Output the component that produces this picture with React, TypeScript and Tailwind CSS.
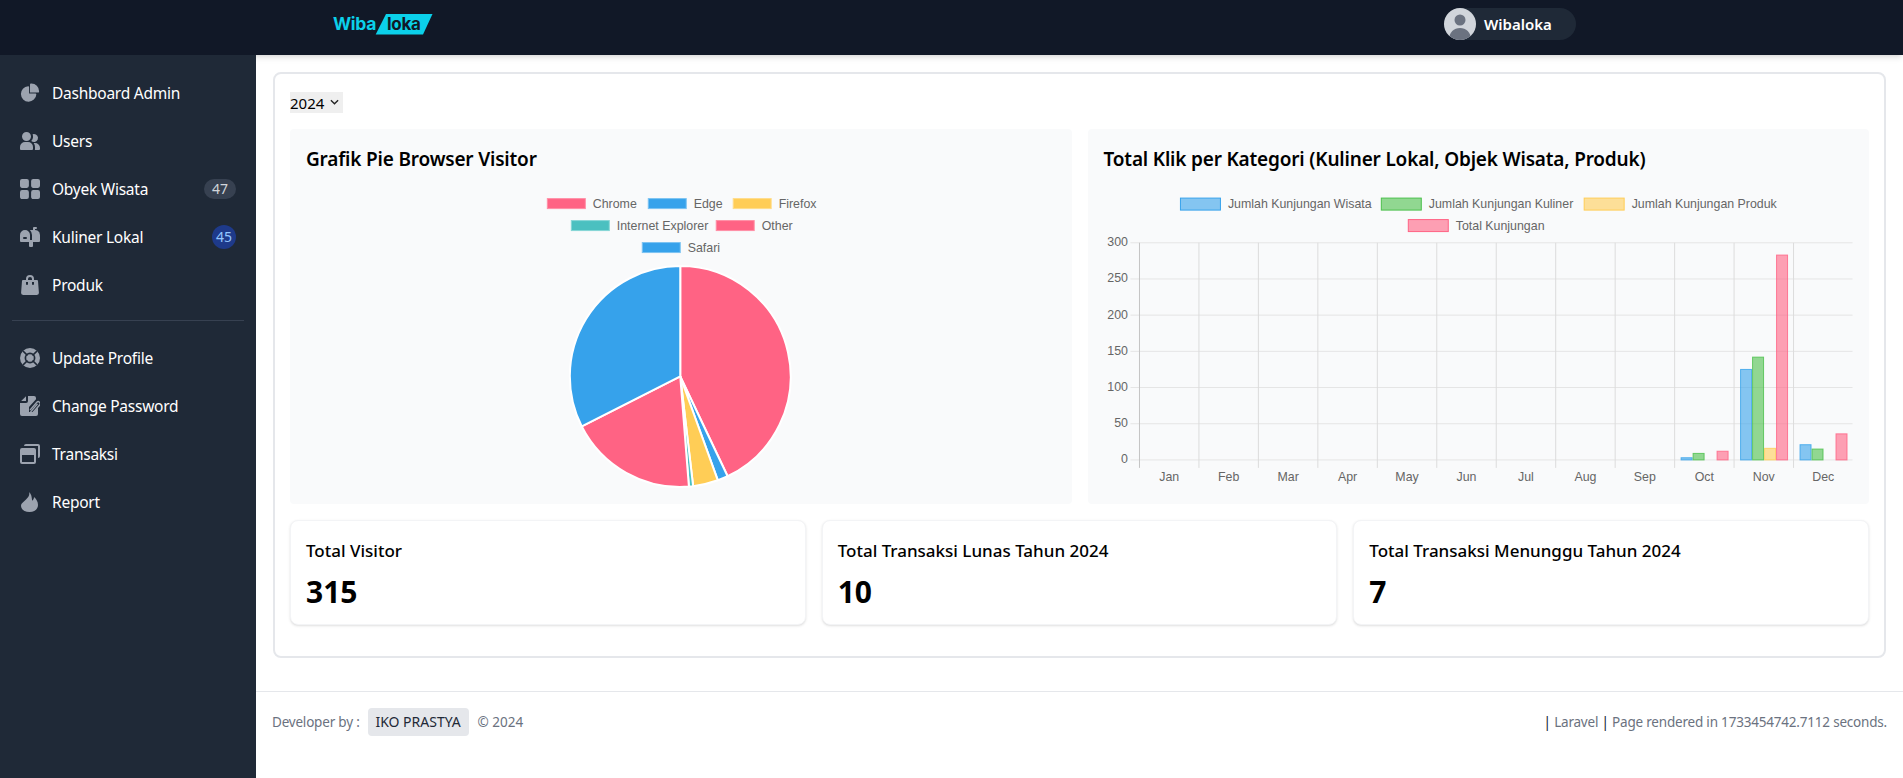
import type { ReactNode } from "react";

const sidebarTop = [
  { label: "Dashboard Admin", icon: "pie" },
  { label: "Users", icon: "users" },
  { label: "Obyek Wisata", icon: "grid", badge: "47" },
  { label: "Kuliner Lokal", icon: "mailbox", badge: "45" },
  { label: "Produk", icon: "bag" },
];

const sidebarBottom = [
  { label: "Update Profile", icon: "buoy" },
  { label: "Change Password", icon: "clip" },
  { label: "Transaksi", icon: "cards" },
  { label: "Report", icon: "flame" },
];

const MenuIcon = ({ name }: { name: string }) => {
  const cls = "h-5 w-5 shrink-0 fill-[#9ca3af]";
  if (name === "pie")
    return (
      <svg viewBox="0 0 22 21" className={cls}>
        <path d="M16.975 11H10V4.025a1 1 0 0 0-1.066-.998 8.5 8.5 0 1 0 9.039 9.039.999.999 0 0 0-1-1.066h.002Z" />
        <path d="M12.5 0c-.157 0-.311.01-.565.027A1 1 0 0 0 11 1.02V10h8.975a1 1 0 0 0 1-.935c.013-.188.028-.374.028-.565A8.51 8.51 0 0 0 12.5 0Z" />
      </svg>
    );
  if (name === "users")
    return (
      <svg viewBox="0 0 20 18" className={cls}>
        <path d="M14 2a3.963 3.963 0 0 0-1.4.267 6.439 6.439 0 0 1-1.331 6.638A4 4 0 1 0 14 2Zm1 9h-1.264A6.957 6.957 0 0 1 15 15v2a2.97 2.97 0 0 1-.184 1H19a1 1 0 0 0 1-1v-1a5.006 5.006 0 0 0-5-5ZM6.5 9a4.5 4.5 0 1 0 0-9 4.5 4.5 0 0 0 0 9ZM8 10H5a5.006 5.006 0 0 0-5 5v2a1 1 0 0 0 1 1h11a1 1 0 0 0 1-1v-2a5.006 5.006 0 0 0-5-5Z" />
      </svg>
    );
  if (name === "grid")
    return (
      <svg viewBox="0 0 18 18" className={cls}>
        <path d="M6.143 0H1.857A1.857 1.857 0 0 0 0 1.857v4.286C0 7.169.831 8 1.857 8h4.286A1.857 1.857 0 0 0 8 6.143V1.857A1.857 1.857 0 0 0 6.143 0Zm10 0h-4.286A1.857 1.857 0 0 0 10 1.857v4.286C10 7.169 10.831 8 11.857 8h4.286A1.857 1.857 0 0 0 18 6.143V1.857A1.857 1.857 0 0 0 16.143 0Zm-10 10H1.857A1.857 1.857 0 0 0 0 11.857v4.286C0 17.169.831 18 1.857 18h4.286A1.857 1.857 0 0 0 8 16.143v-4.286A1.857 1.857 0 0 0 6.143 10Zm10 0h-4.286A1.857 1.857 0 0 0 10 11.857v4.286c0 1.026.831 1.857 1.857 1.857h4.286A1.857 1.857 0 0 0 18 16.143v-4.286A1.857 1.857 0 0 0 16.143 10Z" />
      </svg>
    );
  if (name === "mailbox")
    return (
      <svg viewBox="0 0 20 20" className={cls}>
        <path d="m17.418 3.623-.018-.008a6.713 6.713 0 0 0-2.4-.569V2h1a1 1 0 1 0 0-2h-2a1 1 0 0 0-1 1v2H9.89A6.977 6.977 0 0 1 12 8v5h-2V8A5 5 0 1 0 0 8v6a1 1 0 0 0 1 1h8v4a1 1 0 0 0 1 1h2a1 1 0 0 0 1-1v-4h6a1 1 0 0 0 1-1V8a5 5 0 0 0-2.582-4.377ZM6 12H4a1 1 0 0 1 0-2h2a1 1 0 0 1 0 2Z" />
      </svg>
    );
  if (name === "bag")
    return (
      <svg viewBox="0 0 18 20" className={cls}>
        <path d="M17 5.923A1 1 0 0 0 16 5h-3V4a4 4 0 1 0-8 0v1H2a1 1 0 0 0-1 .923L.086 17.846A2 2 0 0 0 2.08 20h13.84a2 2 0 0 0 1.994-2.153L17 5.923ZM7 9a1 1 0 0 1-2 0V7h2v2Zm0-5a2 2 0 1 1 4 0v1H7V4Zm6 5a1 1 0 1 1-2 0V7h2v2Z" />
      </svg>
    );
  if (name === "buoy")
    return (
      <svg viewBox="0 0 20 20" className={cls}>
        <circle cx="10" cy="10" r="10" />
        <path d="M3 3l4.5 4.5M17 3l-4.5 4.5M3 17l4.5-4.5M17 17l-4.5-4.5" stroke="#1f2937" strokeWidth="1.7" />
        <circle cx="10" cy="10" r="4.6" fill="none" stroke="#1f2937" strokeWidth="1.7" />
      </svg>
    );
  if (name === "clip")
    return (
      <svg viewBox="0 0 20 20" className={cls}>
        <path d="M6 .2V5H1.2L6 .2ZM8 0h6a2 2 0 0 1 2 2v1.2L9 11v5h4.5L18 11.5V18a2 2 0 0 1-2 2H2a2 2 0 0 1-2-2V7h6a2 2 0 0 0 2-2V0Z" />
        <path d="M10.4 13.6l6.4-7.4a2 2 0 0 1 3 2.6l-7.2 8.2a1.1 1.1 0 0 1-1.7-1.4l6.2-7.2" fill="none" stroke="#9ca3af" strokeWidth="1.4" strokeLinecap="round" />
      </svg>
    );
  if (name === "cards")
    return (
      <svg viewBox="0 0 20 20" className={cls}>
        <path d="M18 0H6a2 2 0 0 0-2 2h14v12a2 2 0 0 0 2-2V2a2 2 0 0 0-2-2Z" />
        <path d="M14 4H2a2 2 0 0 0-2 2v12a2 2 0 0 0 2 2h12a2 2 0 0 0 2-2V6a2 2 0 0 0-2-2ZM2 18v-7h12v7H2Z" />
      </svg>
    );
  return (
    <svg viewBox="0 0 20 20" className={cls}>
      <path d="M9 0c1 3-.5 5-3 7.500C3.500 10 1 11.500 1 13.500 1 17.500 4.500 20 9.500 20s8.500-3 8.500-7c0-3.500-1.800-6-4-8-.1 1.700-.6 3-1.900 3.800C11.800 5.200 11.500 2 9 0Z" />
    </svg>
  );
};

const MenuItem = ({ label, icon, badge }: { label: string; icon: string; badge?: string }) => (
  <li className="flex h-10 items-center rounded-lg p-2 text-white">
    <MenuIcon name={icon} />
    <span className="ml-3 flex-1 whitespace-nowrap pt-[1px] text-[15.5px] tracking-[-0.25px]">{label}</span>
    {badge === "47" && (
      <span className="flex h-5 w-8 items-center justify-center rounded-full bg-[#374151] text-sm text-[#d1d5db]">47</span>
    )}
    {badge === "45" && (
      <span className="flex h-6 w-6 items-center justify-center rounded-full bg-[#1e3a8a] text-sm text-[#93c5fd]">45</span>
    )}
  </li>
);

const Legend = ({ x, y, w = 38, h = 10, text, fill, stroke }: { x: number; y: number; w?: number; h?: number; text: string; fill: string; stroke: string }) => (
  <g>
    <rect x={x} y={y - h / 2} width={w} height={h} fill={fill} stroke={stroke} strokeWidth="1" />
    <text x={x + w + 7.5} y={y + 4} fontSize="12.4" fill="#666" fontFamily="Liberation Sans, Arial, sans-serif">
      {text}
    </text>
  </g>
);

const slices = [
  { from: 0, to: 154.6, color: "#ff6384" },
  { from: 154.6, to: 160.1, color: "#36a2eb" },
  { from: 160.1, to: 173.3, color: "#ffcd56" },
  { from: 173.3, to: 175.5, color: "#4bc0c0" },
  { from: 175.5, to: 243.1, color: "#ff6384" },
  { from: 243.1, to: 360, color: "#36a2eb" },
];

const polar = (deg: number, r: number, cx: number, cy: number) => {
  const a = (deg * Math.PI) / 180;
  return [cx + r * Math.sin(a), cy - r * Math.cos(a)];
};

const PieChart = () => {
  const cx = 680.5;
  const cy = 376.5;
  const r = 110.5;
  return (
    <svg viewBox="306 190 750 298" className="block h-[298px] w-full">
      <Legend x={547.5} y={203.5} text="Chrome" fill="#ff6384" stroke="#ff8fa6" />
      <Legend x={648.5} y={203.5} text="Edge" fill="#36a2eb" stroke="#7cc3f2" />
      <Legend x={733.5} y={203.5} text="Firefox" fill="#ffcd56" stroke="#ffdc8a" />
      <Legend x={571.5} y={225.5} text="Internet Explorer" fill="#4bc0c0" stroke="#86d6d6" />
      <Legend x={716.5} y={225.5} text="Other" fill="#ff6384" stroke="#ff8fa6" />
      <Legend x={642.5} y={247.5} text="Safari" fill="#36a2eb" stroke="#7cc3f2" />
      {slices.map((s) => {
        const [x1, y1] = polar(s.from, r, cx, cy);
        const [x2, y2] = polar(s.to, r, cx, cy);
        const large = s.to - s.from > 180 ? 1 : 0;
        return (
          <path
            key={s.from}
            d={`M${cx} ${cy}L${x1} ${y1}A${r} ${r} 0 ${large} 1 ${x2} ${y2}Z`}
            fill={s.color}
            stroke="#fff"
            strokeWidth="2"
            strokeLinejoin="round"
          />
        );
      })}
    </svg>
  );
};

const months = ["Jan", "Feb", "Mar", "Apr", "May", "Jun", "Jul", "Aug", "Sep", "Oct", "Nov", "Dec"];
const seriesStyle = [
  { fill: "#36a2eb99", stroke: "#36a2eb" },
  { fill: "#4bc04b99", stroke: "#4bc04b" },
  { fill: "#ffcd5699", stroke: "#ffcd56" },
  { fill: "#ff638499", stroke: "#ff6384" },
];
const barData: Record<number, number[]> = {
  9: [3, 9, 0, 12],
  10: [125, 142, 16, 283],
  11: [21, 15, 0, 36],
};

const BarChart = () => {
  const x0 = 1139.5;
  const y0 = 460;
  const step = 59.5;
  const scale = 217.3 / 300;
  const font = "Liberation Sans, Arial, sans-serif";
  return (
    <svg viewBox="1104 190 750 298" className="block h-[298px] w-full">
      <Legend x={1180.5} y={204} w={40} h={12} text="Jumlah Kunjungan Wisata" fill="#36a2eb99" stroke="#36a2eb" />
      <Legend x={1381.5} y={204} w={40} h={12} text="Jumlah Kunjungan Kuliner" fill="#4bc04b99" stroke="#4bc04b" />
      <Legend x={1584.5} y={204} w={40} h={12} text="Jumlah Kunjungan Produk" fill="#ffcd5699" stroke="#ffcd56" />
      <Legend x={1408.5} y={225.5} w={40} h={12} text="Total Kunjungan" fill="#ff638499" stroke="#ff6384" />
      {[0, 50, 100, 150, 200, 250, 300].map((v) => {
        const y = y0 - v * scale;
        return (
          <g key={v}>
            <line x1={1130.5} x2={1853} y1={y} y2={y} stroke="#e5e5e5" strokeWidth="1" />
            <text x={1128} y={y + 3.5} textAnchor="end" fontSize="12.4" fill="#666" fontFamily={font}>
              {v}
            </text>
          </g>
        );
      })}
      {months.map((m, i) => {
        const x = x0 + i * step;
        return (
          <g key={m}>
            <line x1={x} x2={x} y1={242.7} y2={468} stroke={i === 0 ? "#c4c4c4" : "#dcdcdc"} strokeWidth="1" />
            <text x={x + step / 2} y={481} textAnchor="middle" fontSize="12.4" fill="#666" fontFamily={font}>
              {m}
            </text>
          </g>
        );
      })}
      {Object.entries(barData).map(([month, values]) =>
        values.map((v, i) =>
          v === 0 ? null : (
            <rect
              key={`${month}-${i}`}
              x={x0 + Number(month) * step + 6.5 + i * 12}
              y={y0 - v * scale}
              width={11}
              height={v * scale}
              fill={seriesStyle[i].fill}
              stroke={seriesStyle[i].stroke}
              strokeOpacity="0.8"
              strokeWidth="1"
            />
          ),
        ),
      )}
    </svg>
  );
};

const ChartPanel = ({ title, children }: { title: string; children: ReactNode }) => (
  <div className="rounded bg-[#f9fafb] p-4">
    <h3 className="mb-[17px] h-7 text-[19px] leading-7 font-semibold tracking-[-0.18px] text-black">{title}</h3>
    {children}
  </div>
);

const StatCard = ({ title, value }: { title: string; value: string }) => (
  <div className="rounded-lg border border-[#f3f4f6] bg-white px-[15px] pt-4 pb-[14px] shadow">
    <h4 className="mb-[9px] h-7 text-[17px] leading-7 font-medium text-black">{title}</h4>
    <p className="h-9 text-3xl leading-9 font-bold text-black">{value}</p>
  </div>
);

export default function App() {
  return (
    <div className="flex h-screen flex-col overflow-hidden bg-white font-['Noto_Sans',sans-serif]">
      <header className="relative z-10 flex h-[55px] shrink-0 items-start bg-[#111827] shadow-md">
        <svg viewBox="0 0 102 24" className="mt-[12px] ml-[332px] h-6 w-[102px]">
          <path d="M54 2h46.500L91 22.500H43.700Z" fill="#0bd0ea" />
          <text x="1" y="18" fontSize="17.5" fontWeight="700" fill="#0bd0ea" fontFamily="Inter, sans-serif" letterSpacing="-0.3">
            Wiba
          </text>
          <text x="55" y="18" fontSize="17" fontWeight="700" fill="#111827" fontFamily="Inter, sans-serif" letterSpacing="-0.3">
            loka
          </text>
        </svg>
        <div className="mt-2 ml-[1010px] flex h-8 w-[132px] items-center rounded-full bg-[#1f2937]">
          <svg viewBox="0 0 32 32" className="h-8 w-8 shrink-0 rounded-full bg-[#d1d5db]">
            <circle cx="16" cy="12" r="5.500" fill="#6b7280" />
            <path d="M5 32c0-8 5-12 11-12s11 4 11 12Z" fill="#6b7280" />
          </svg>
          <span className="ml-2 text-[15px] font-semibold text-white">Wibaloka</span>
        </div>
      </header>
      <div className="flex min-h-0 flex-1">
        <aside className="relative z-20 w-64 shrink-0 bg-[#1f2937] px-3 pt-[18px]">
          <ul className="flex flex-col gap-2">
            {sidebarTop.map((item) => (
              <MenuItem key={item.label} {...item} />
            ))}
          </ul>
          <ul className="mt-[15px] flex flex-col gap-2 border-t border-[#374151] pt-[17px]">
            {sidebarBottom.map((item) => (
              <MenuItem key={item.label} {...item} />
            ))}
          </ul>
        </aside>
        <main className="min-w-0 flex-1">
          <div className="mx-[17px] mt-[17px] rounded-lg border-2 border-[#e5e7eb] bg-white px-[15px] pt-[18px] pb-[31px]">
            <div className="relative h-[21px] w-[53px]">
              <select defaultValue="2024" className="block h-[21px] w-full appearance-none bg-[#efefef] p-0 text-[15px] text-black">
                <option>2024</option>
              </select>
              <svg viewBox="0 0 10 6" className="pointer-events-none absolute top-[7px] right-[4px] h-[6px] w-[9px] fill-none stroke-[#222] stroke-[1.5]">
                <path d="M1 1l4 4 4-4" />
              </svg>
            </div>
            <div className="mt-4 grid grid-cols-2 gap-4">
              <ChartPanel title="Grafik Pie Browser Visitor">
                <PieChart />
              </ChartPanel>
              <ChartPanel title="Total Klik per Kategori (Kuliner Lokal, Objek Wisata, Produk)">
                <BarChart />
              </ChartPanel>
            </div>
            <div className="mt-4 grid grid-cols-3 gap-4">
              <StatCard title="Total Visitor" value="315" />
              <StatCard title="Total Transaksi Lunas Tahun 2024" value="10" />
              <StatCard title="Total Transaksi Menunggu Tahun 2024" value="7" />
            </div>
          </div>
          <footer className="mt-[33px] flex items-center justify-between border-t border-[#e5e7eb] px-4 pt-4 text-[13.5px] tracking-[-0.2px] text-[#6b7280]">
            <div className="flex items-center">
              <span>Developer by :</span>
              <span className="ml-2 flex h-7 w-[101px] items-center justify-center rounded bg-[#e5e7eb] text-sm tracking-normal text-[#1f2937]">IKO PRASTYA</span>
              <span className="ml-[9px] tracking-normal">© 2024</span>
            </div>
            <p>
              <span className="text-[#111827]">|</span> Laravel <span className="text-[#111827]">|</span> Page rendered in 1733454742.7112 seconds.
            </p>
          </footer>
        </main>
      </div>
    </div>
  );
}
